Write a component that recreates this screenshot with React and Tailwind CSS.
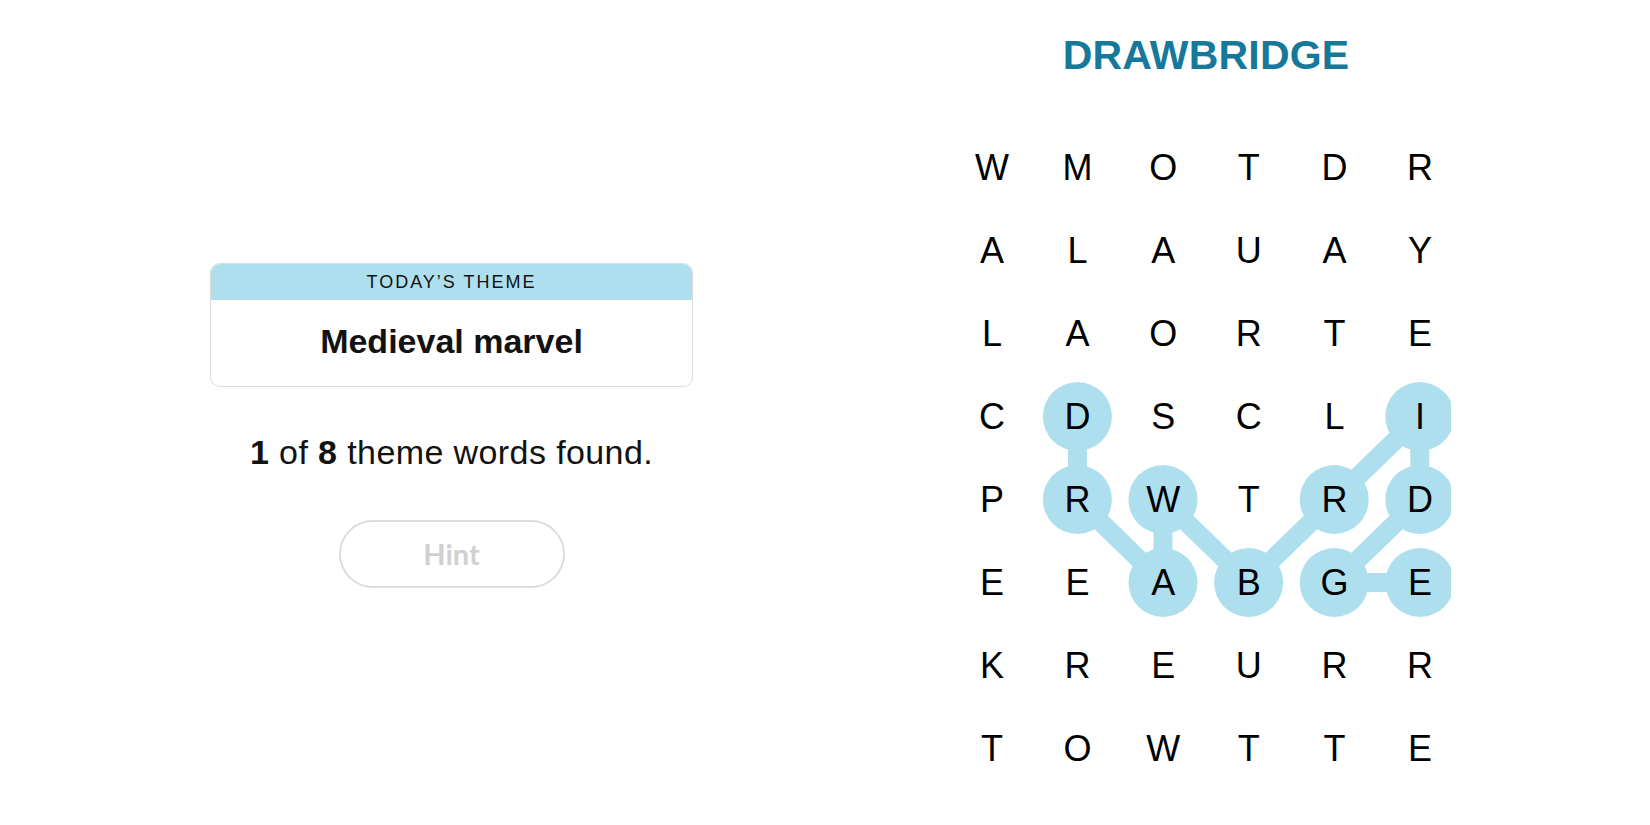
const ROWS = ['WMOTDR', 'ALAUAY', 'LAORTE', 'CDSCLI', 'PRWTRD', 'EEABGE', 'KREURR', 'TOWTTE']

const COL = 85.6
const ROW = 83

// path of the found word, as [row, col]
const FOUND = [[3, 1], [4, 1], [5, 2], [4, 2], [5, 3], [4, 4], [3, 5], [4, 5], [5, 4], [5, 5]]

const cx = (c) => COL / 2 + COL * c
const cy = (r) => ROW / 2 + ROW * r

function Highlight() {
    const pts = FOUND.map(([r, c]) => `${cx(c)},${cy(r)}`).join(' ')
    return (
        <svg className="absolute left-0 top-0" width="502" height={ROW * 8}>
            <polyline points={pts} fill="none" stroke="#aedfee" strokeWidth="19" strokeLinejoin="round" />
            {FOUND.map(([r, c]) => (
                <circle key={`${r}-${c}`} cx={cx(c)} cy={cy(r)} r="34.5" fill="#aedfee" />
            ))}
        </svg>
    )
}

function Board() {
    return (
        <div className="relative">
            <Highlight />
            <div className="relative grid grid-cols-[repeat(6,85.6px)] auto-rows-[83px]">
                {ROWS.flatMap((row, r) =>
                    row.split('').map((ch, c) => (
                        <div key={`${r}-${c}`} className="flex items-center justify-center text-[36px] leading-none text-black">
                            {ch}
                        </div>
                    ))
                )}
            </div>
        </div>
    )
}

export default function App() {
    return (
        <div className="w-[1650px] h-[825px] bg-white flex font-['Liberation_Sans',Arial,sans-serif] text-[#121212]">
            <div className="ml-[210px] mt-[263px] w-[483px] flex flex-col items-center">
                <div className="w-full rounded-[10px] border border-[#dcdcdc] overflow-hidden">
                    <div className="h-[36px] bg-[#aedfee] flex items-center justify-center text-[18px] tracking-[2px] uppercase">
                        Today’s Theme
                    </div>
                    <div className="h-[86px] flex items-center justify-center text-[34px] font-bold pb-[4px]">
                        Medieval marvel
                    </div>
                </div>
                <p className="mt-[45px] text-[34px] leading-[40px] tracking-[0.4px]">
                    <b>1</b> of <b>8</b> theme words found.
                </p>
                <button className="mt-[48px] w-[226px] h-[68px] rounded-full border-2 border-[#dcdcdc] font-['Lato',sans-serif] font-bold text-[29px] text-[#d0d0d0]">
                    Hint
                </button>
            </div>
            <div className="ml-[256px] w-[514px] flex flex-col items-center">
                <h1 className="mt-[35px] text-[41px] leading-[41px] font-bold text-[#17799a] tracking-[0.2px]">
                    DRAWBRIDGE
                </h1>
                <div className="mt-[50px]">
                    <Board />
                </div>
            </div>
        </div>
    )
}
